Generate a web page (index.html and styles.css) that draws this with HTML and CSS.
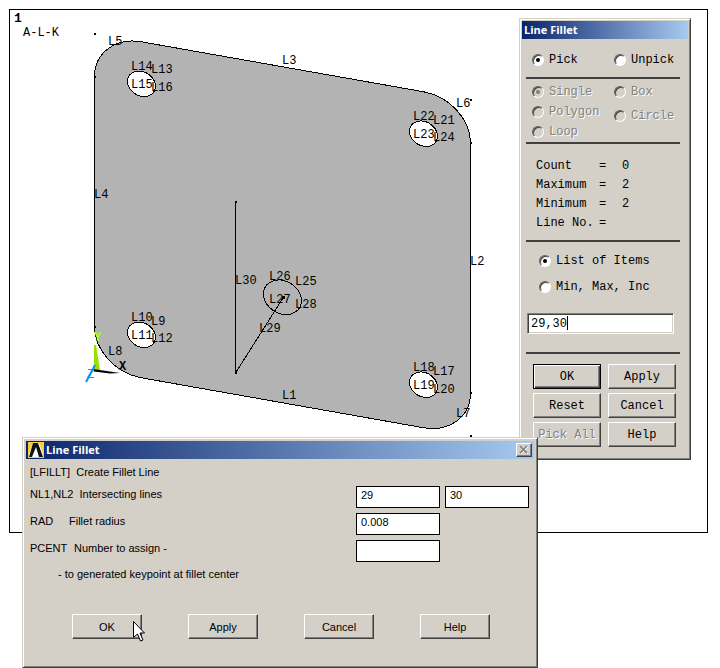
FILE: index.html
```html
<!DOCTYPE html>
<html lang="en">
<head>
<meta charset="utf-8">
<meta name="viewport" content="width=device-width, initial-scale=1">
<title>Line Fillet</title>
<link rel="stylesheet" href="styles.css">
</head>
<body>
<main class="desktop">
  <svg class="plot" viewBox="9 9 699 524" role="img" aria-label="Line plot">
    <rect class="edge" x="9.5" y="9.5" width="698" height="523"/>
    <!-- Plate with four bolt holes, sheared into the viewing direction -->
    <g transform="matrix(1 .177 0 1 94.500 33.500)">
      <path class="plate" d="M0 43A47 43 0 0 1 47 0H329A47 43 0 0 1 376 43V293A47 43 0 0 1 329 336H47A47 43 0 0 1 0 293Z"/>
      <ellipse class="hole" cx="47" cy="42" rx="14" ry="12.5"/>
      <ellipse class="hole" cx="329" cy="42" rx="14" ry="12.5"/>
      <ellipse class="hole" cx="47" cy="293" rx="14" ry="12.5"/>
      <ellipse class="hole" cx="329" cy="293" rx="14" ry="12.5"/>
      <ellipse class="edge" cx="188" cy="230.500" rx="19" ry="17"/>
    </g>
    <path class="edge" d="M235.500 202V373L283 298"/>
    <path class="points" d="M94 33h2v2h-2zM470 99h2v2h-2zM470 435h2v2h-2zM235 201h2v2h-2zM235 372h2v2h-2zM282 296h3v3h-3zM94 76h2v2h-2zM470 142h2v2h-2zM470 392h2v2h-2zM94 326h2v2h-2z"/>
    <!-- Coordinate triad -->
    <path class="axis-y" d="M94 345l2 0 4 25-6 1z"/>
    <path class="points" d="M93 369l27 4-10 .5-16-2z"/>
    <path class="axis-z" d="M95 365L86 382"/>
    <text class="label-y" x="94" y="341">Y</text>
    <text class="label-z" x="87" y="378">Z</text>
    <text class="label-x" x="119" y="370">X</text>
    <text class="number" x="14" y="22">1</text>
    <g class="labels">
      <text x="23" y="36">A-L-K</text>
      <text x="108" y="45">L5</text><text x="282" y="64">L3</text>
      <text x="94" y="198">L4</text><text x="456" y="107">L6</text>
      <text x="470" y="265">L2</text><text x="456" y="417">L7</text>
      <text x="282" y="399">L1</text><text x="108" y="355">L8</text>
      <text x="131" y="70">L14</text><text x="151" y="73">L13</text>
      <text x="131" y="88">L15</text><text x="151" y="91">L16</text>
      <text x="413" y="120">L22</text><text x="433" y="124">L21</text>
      <text x="413" y="138">L23</text><text x="433" y="141">L24</text>
      <text x="131" y="321">L10</text><text x="151" y="325">L9</text>
      <text x="131" y="339">L11</text><text x="151" y="342">L12</text>
      <text x="413" y="371">L18</text><text x="433" y="375">L17</text>
      <text x="413" y="389">L19</text><text x="433" y="393">L20</text>
      <text x="269" y="280">L26</text><text x="295" y="285">L25</text>
      <text x="269" y="303">L27</text><text x="295" y="308">L28</text>
      <text x="235" y="284">L30</text><text x="259" y="332">L29</text>
    </g>
  </svg>

  <form class="window picker">
    <h2 class="titlebar">Line Fillet</h2>
    <div class="picker-body">
      <div class="modes">
        <label class="choice"><input type="radio" name="mode" checked>Pick</label>
        <label class="choice"><input type="radio" name="mode">Unpick</label>
      </div>
      <hr>
      <div class="shapes">
        <div class="shape-list">
          <label class="choice off"><input type="radio" name="shape" checked disabled>Single</label>
          <label class="choice off"><input type="radio" name="shape" disabled>Polygon</label>
          <label class="choice off"><input type="radio" name="shape" disabled>Loop</label>
        </div>
        <div class="shape-list loose">
          <label class="choice off"><input type="radio" name="shape" disabled>Box</label>
          <label class="choice off"><input type="radio" name="shape" disabled>Circle</label>
        </div>
      </div>
      <hr>
      <table class="stats">
        <tr><th scope="row">Count</th><td>=</td><td>0</td></tr>
        <tr><th scope="row">Maximum</th><td>=</td><td>2</td></tr>
        <tr><th scope="row">Minimum</th><td>=</td><td>2</td></tr>
        <tr><th scope="row">Line No.</th><td>=</td><td></td></tr>
      </table>
      <hr>
      <div class="entry">
        <label class="choice"><input type="radio" name="entry" checked>List of Items</label>
        <label class="choice"><input type="radio" name="entry">Min, Max, Inc</label>
      </div>
      <div class="items">
        <input class="items-input" type="text" value="29,30" aria-label="List of Items">
        <span class="caret"></span>
      </div>
      <hr>
      <div class="picker-buttons">
        <button class="button default" type="button">OK</button>
        <button class="button" type="button">Apply</button>
        <button class="button" type="button">Reset</button>
        <button class="button" type="button">Cancel</button>
        <button class="button" type="button" disabled>Pick All</button>
        <button class="button" type="button">Help</button>
      </div>
    </div>
  </form>

  <form class="window dialog">
    <header class="titlebar">
      <svg class="logo" viewBox="0 0 16 16" aria-hidden="true">
        <rect width="16" height="16" fill="#f4cf45"/>
        <path d="M1 15V12L5 1h6l4 11v3z" fill="#fff"/>
        <path d="M1 15L5 1h5l5 14h-4L8 5 4 15z" fill="#111"/>
      </svg>
      <h2 class="title">Line Fillet</h2>
      <button class="close" type="button" aria-label="Close">
        <svg viewBox="0 0 10 10" aria-hidden="true"><path d="M2 2l7 7M9 2L2 9" stroke="#fff"/><path d="M1 1l7 7M8 1L1 8" stroke="#808080" stroke-width="1.5"/></svg>
      </button>
    </header>
    <div class="dialog-body">
      <p class="line">[LFILLT]&nbsp; Create Fillet Line</p>
      <div class="fields">
        <label for="nl1">NL1,NL2&nbsp; Intersecting lines</label>
        <input id="nl1" type="text" value="29">
        <input type="text" value="30" aria-label="NL2">
        <label for="rad"><span class="key">RAD</span>Fillet radius</label>
        <input class="first" id="rad" type="text" value="0.008">
        <label for="pcent"><span class="key wide">PCENT</span>Number to assign -</label>
        <input class="first" id="pcent" type="text">
      </div>
      <p class="line note">- to generated keypoint at fillet center</p>
      <div class="dialog-buttons">
        <button class="button" type="button">OK</button>
        <button class="button" type="button">Apply</button>
        <button class="button" type="button">Cancel</button>
        <button class="button" type="button">Help</button>
      </div>
    </div>
    <svg class="cursor" viewBox="0 0 12 21" aria-hidden="true">
      <path d="M.5 .5V16.500L4.500 13l3 7 2.500-1-3-7h4.500z" fill="#fff" stroke="#000"/>
    </svg>
  </form>
</main>
</body>
</html>
```
FILE: styles.css
```css
* {
  box-sizing: border-box;
}

body {
  margin: 0;
  background: #fff;
  color: #000;
  font: 11px/16px "Liberation Sans", sans-serif;
}

h2,
p {
  margin: 0;
}

.desktop {
  position: relative;
  min-height: 100vh;
  padding: 9px 12px 0 9px;
}

/* Plot */
.plot {
  display: block;
  width: 100%;
  font: 12px "Liberation Mono", monospace;
}

.edge,
.plate,
.hole {
  fill: none;
  stroke: #000;
  shape-rendering: crispEdges;
  vector-effect: non-scaling-stroke;
}

.plate {
  fill: #b3b3b3;
}

.hole {
  fill: #fff;
}

.points {
  fill: #000;
}

.axis-y {
  fill: #9be000;
}

.axis-z {
  stroke: #0096ff;
  stroke-width: 2;
}

.label-y {
  fill: #b4ff00;
  font-weight: bold;
}

.label-z {
  fill: #0096ff;
}

.label-x {
  font-weight: bold;
}

.number {
  font-size: 13px;
  font-weight: bold;
}

/* Windows */
.window {
  position: absolute;
  background: #d4d0c8;
  border: 1px solid;
  border-color: #d4d0c8 #404040 #404040 #d4d0c8;
  box-shadow: inset 1px 1px #fff, inset -1px -1px #808080;
  padding: 3px;
}

.titlebar {
  display: flex;
  align-items: center;
  height: 18px;
  background: linear-gradient(90deg, #0a246a, #a6caf0);
  color: #fff;
  font: bold 11px/18px "Open Sans", sans-serif;
}

.button {
  height: 25px;
  padding: 0;
  background: #d4d0c8;
  border: 1px solid;
  border-color: #fff #404040 #404040 #fff;
  box-shadow: inset -1px -1px #808080;
  color: #000;
  font: inherit;
}

.button:disabled {
  color: #808080;
  text-shadow: 1px 1px #fff;
}

.button.default {
  border: 1px solid #000;
  box-shadow: inset 1px 1px #fff, inset -1px -1px #404040, inset -2px -2px #808080;
}

/* Entity picker */
.picker {
  top: 18px;
  left: 519px;
  width: 172px;
  padding: 2px;
  font: 12px/16px "Liberation Mono", monospace;
}

.picker .titlebar {
  padding-left: 2px;
}

.picker-body {
  padding: 13px 8px 10px 4px;
}

hr {
  height: 2px;
  margin: 0;
  border: 0;
  background: #404040;
}

.modes,
.shapes {
  display: grid;
  grid-template-columns: 82px 1fr;
  padding-left: 6px;
}

.modes {
  padding-bottom: 9px;
}

.shapes {
  padding-top: 5px;
  padding-bottom: 2px;
}

.shape-list {
  display: flex;
  flex-direction: column;
  gap: 4px;
}

.shape-list.loose {
  gap: 8px;
}

.choice {
  display: flex;
  align-items: center;
  gap: 5px;
  height: 16px;
}

.choice.off {
  color: #808080;
  text-shadow: 1px 1px #fff;
}

.choice input {
  appearance: none;
  display: grid;
  place-items: center;
  flex: none;
  width: 12px;
  height: 12px;
  margin: 0;
  border: 1px solid;
  border-color: #606060 #fff #fff #606060;
  border-radius: 50%;
  background: #fff;
  box-shadow: inset 1px 1px #404040;
}

.choice input:disabled {
  background: #d4d0c8;
}

.choice input:checked::before {
  content: "";
  width: 4px;
  height: 4px;
  border-radius: 50%;
  background: #000;
}

.choice input:checked:disabled::before {
  background: #808080;
}

.stats {
  margin: 12px 0 8px 10px;
  border-collapse: collapse;
}

.stats th,
.stats td {
  height: 19px;
  padding: 0;
  font-weight: normal;
  text-align: left;
}

.stats th {
  width: 63px;
}

.stats td {
  width: 23px;
}

.entry {
  display: flex;
  flex-direction: column;
  gap: 10px;
  padding: 11px 0 0 13px;
}

.items {
  display: flex;
  position: relative;
  margin: 18px 6px 18px 1px;
}

.items-input {
  width: 100%;
  height: 21px;
  padding: 0 3px;
  border: 1px solid;
  border-color: #808080 #fff #fff #808080;
  border-radius: 0;
  background: #fff;
  box-shadow: inset 1px 1px #404040, inset -1px -1px #d4d0c8;
  font: inherit;
}

.caret {
  position: absolute;
  top: 3px;
  left: 40px;
  width: 1px;
  height: 14px;
  background: #000;
}

.picker-buttons {
  display: grid;
  grid-template-columns: 1fr 1fr;
  gap: 4px 7px;
  padding: 10px 4px 0 7px;
}

/* Fillet dialog */
.dialog {
  top: 437px;
  left: 22px;
  width: 516px;
}

.logo {
  width: 16px;
  height: 16px;
  margin: 0 2px;
}

.title {
  flex: 1;
  font: inherit;
}

.close {
  width: 16px;
  height: 14px;
  margin-right: 2px;
  padding: 0;
  border: 1px solid;
  border-color: #fff #404040 #404040 #fff;
  background: #d4d0c8;
  box-shadow: inset -1px -1px #808080;
}

.close svg {
  display: block;
  width: 10px;
  height: 10px;
  margin: auto;
}

.dialog-body {
  padding: 5px 5px 25px 4px;
}

.fields {
  display: grid;
  grid-template-columns: 1fr 84px 84px;
  gap: 5px;
  padding-top: 6px;
}

.fields label {
  grid-column: 1;
}

.fields input {
  width: 100%;
  height: 22px;
  padding: 0 4px 4px;
  border: 1px solid #000;
  border-radius: 0;
  background: #fff;
  font: inherit;
}

.key {
  display: inline-block;
  width: 39px;
}

.key.wide {
  width: 44px;
}

.note {
  margin-top: 4px;
  padding-left: 28px;
}

.dialog-buttons {
  display: grid;
  grid-template-columns: repeat(4, 70px);
  gap: 46px;
  padding: 32px 0 0 42px;
}

.cursor {
  position: absolute;
  top: 183px;
  left: 110px;
  width: 12px;
  height: 21px;
}
```
